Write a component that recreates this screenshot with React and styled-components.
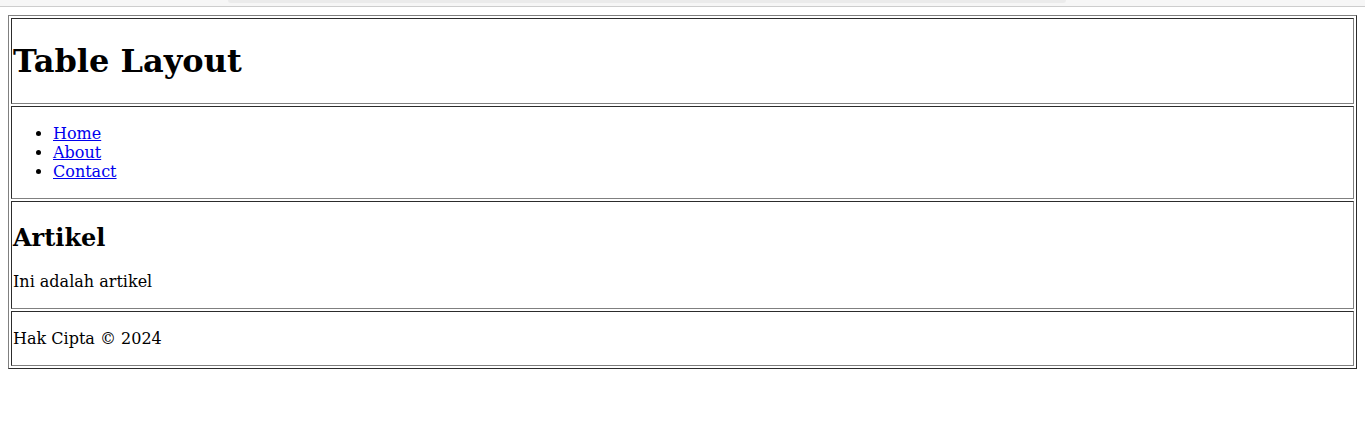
import React from "react";
import styled, { createGlobalStyle } from "styled-components";

const GlobalStyle = createGlobalStyle`
  body {
    margin: 0;
    background: #ffffff;
    font-family: "DejaVu Serif", serif;
    font-size: 16px;
    color: #000;
  }
`;

const TopStrip = styled.div`
  height: 6px;
  background-color: #f6f6f6;
  border-bottom: 1px solid #cdcdcd;
`;

const StripThumb = styled.div`
  margin-left: 228px;
  width: 838px;
  height: 3px;
  background-color: #ebebeb;
  border-radius: 0 0 3px 3px;
`;

const Page = styled.div`
  padding: 8px;
`;

const LayoutTable = styled.table`
  width: 100%;
  border-collapse: separate;
  border-spacing: 2px;
  border: 1px outset gray;
`;

const Cell = styled.td`
  padding: 1px;
  border: 1px inset gray;
  vertical-align: middle;
`;

const Title = styled.h1`
  font-size: 2em;
  font-weight: bold;
  margin: 22.4px 0 21.44px;
`;

const NavList = styled.ul`
  margin: 1em 0;
  padding-left: 40px;
  list-style: disc;
`;

const NavLink = styled.a`
  color: #0000ee;
  text-decoration: underline;
`;

const ArticleTitle = styled.h2`
  font-size: 1.5em;
  font-weight: bold;
  margin: 0.83em 0;
`;

const Text = styled.p`
  margin: 1em 0;
`;

const links = ["Home", "About", "Contact"];

const App = () => {
  return (
    <>
      <GlobalStyle />
      <TopStrip>
        <StripThumb />
      </TopStrip>
      <Page>
        <LayoutTable>
          <tbody>
            <tr>
              <Cell>
                <header>
                  <Title>Table Layout</Title>
                </header>
              </Cell>
            </tr>
            <tr>
              <Cell>
                <nav>
                  <NavList>
                    {links.map((l) => (
                      <li key={l}>
                        <NavLink href="#">{l}</NavLink>
                      </li>
                    ))}
                  </NavList>
                </nav>
              </Cell>
            </tr>
            <tr>
              <Cell>
                <article>
                  <ArticleTitle>Artikel</ArticleTitle>
                  <Text>Ini adalah artikel</Text>
                </article>
              </Cell>
            </tr>
            <tr>
              <Cell>
                <footer>
                  <Text>Hak Cipta © 2024</Text>
                </footer>
              </Cell>
            </tr>
          </tbody>
        </LayoutTable>
      </Page>
    </>
  );
};

export default App;
